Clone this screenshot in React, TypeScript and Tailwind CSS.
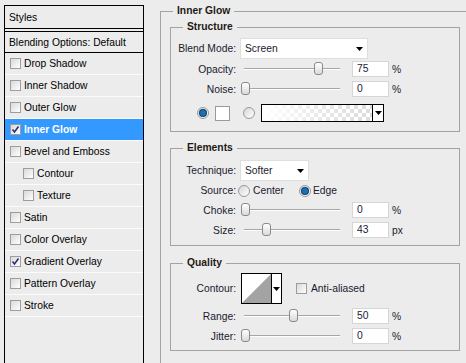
import React from "react";

const LINE = "border-[#a3a3a3]";

function Check({ checked = false }: { checked?: boolean }) {
  return (
    <div className="w-[11px] h-[11px] shrink-0 border border-[#9d9d9d] bg-linear-to-br from-[#d9d9d9] to-white flex items-center justify-center">
      {checked && (
        <svg width="9" height="9" viewBox="0 0 9 9">
          <path d="M1.5 4.5 L3.5 7 L7.5 1.5" fill="none" stroke="#2b2f7a" strokeWidth="1.6" />
        </svg>
      )}
    </div>
  );
}

function Radio({ on = false }: { on?: boolean }) {
  return (
    <div className="w-[12px] h-[12px] shrink-0 rounded-full border border-[#9a9a9a] bg-linear-to-br from-[#d6d6d6] to-white flex items-center justify-center">
      {on && <div className="w-[6px] h-[6px] rounded-full bg-[#1b6fb3] ring-1 ring-[#0d3f6e]" />}
    </div>
  );
}

function Arrow() {
  return (
    <svg width="7" height="4" viewBox="0 0 7 4" className="shrink-0">
      <path d="M0 0 H7 L3.5 4 Z" fill="#000" />
    </svg>
  );
}

function StyleRow({
  label,
  checked,
  indent,
  active,
}: {
  label: string;
  checked?: boolean;
  indent?: boolean;
  active?: boolean;
}) {
  return (
    <div
      className={
        "h-[22px] border-b border-[#fbfbfb] flex items-center " +
        (indent ? "pl-[18px] " : "pl-[5px] ") +
        (active ? "bg-[#3399ff] text-white font-bold" : "text-black")
      }
    >
      <Check checked={checked} />
      <span className="ml-[3px]">{label}</span>
    </div>
  );
}

function Group({
  title,
  children,
  className = "",
}: {
  title: string;
  children: React.ReactNode;
  className?: string;
}) {
  return (
    <div className={"w-[290px] flex flex-col " + className}>
      <div className="h-[14px] flex">
        <div className={"w-[13px] h-[7px] self-end border-l border-t " + LINE} />
        <div className="px-[4px] font-bold leading-[14px] text-[#1e1a14]">{title}</div>
        <div className={"flex-1 h-[7px] self-end border-t border-r " + LINE} />
      </div>
      <div className={"border-l border-r border-b flex flex-col " + LINE}>{children}</div>
    </div>
  );
}

function Label({ children }: { children: React.ReactNode }) {
  return <div className="w-[65px] shrink-0 text-right">{children}</div>;
}

function Slider({ pos }: { pos: number }) {
  return (
    <div className="ml-[4px] w-[104px] h-[16px] relative flex items-center">
      <div className="mx-[4px] flex-1 h-[2px] border-t border-[#a6a6a6] border-b border-b-white" />
      <div
        className="absolute top-[1px] w-[9px] h-[13px] rounded-[3px] border border-[#8a8a8a] bg-linear-to-b from-white to-[#dadada]"
        style={{ left: pos - 4 }}
      />
    </div>
  );
}

function Field({ value, unit }: { value: string; unit: string }) {
  return (
    <>
      <div className="ml-[8px] w-[37px] h-[16px] bg-white border border-[#d6d6d6] pl-[4px] flex items-center text-[#1a1a3a] leading-none">
        {value}
      </div>
      <span className="ml-[3px]">{unit}</span>
    </>
  );
}

function SliderRow({
  label,
  pos,
  value,
  unit,
  h = "h-[20px]",
  extra = "",
}: {
  label: string;
  pos: number;
  value: string;
  unit: string;
  h?: string;
  extra?: string;
}) {
  return (
    <div className={"flex items-center " + h + " " + extra}>
      <Label>{label}</Label>
      <Slider pos={pos} />
      <Field value={value} unit={unit} />
    </div>
  );
}

function Select({ text, w }: { text: string; w: string }) {
  return (
    <div className={"ml-[4px] h-[21px] bg-white border border-[#dedede] flex items-center pl-[4px] pr-[4px] " + w}>
      <span className="flex-1">{text}</span>
      <Arrow />
    </div>
  );
}

export default function App() {
  return (
    <div className="w-[466px] h-[363px] overflow-hidden bg-[#ececec] flex font-['Liberation_Sans',Arial,sans-serif] text-[10.3px] text-[#1a1a2e] leading-[13px]">
      {/* Left styles list */}
      <div className="ml-[4px] mt-[5px] w-[140px] h-[420px] shrink-0 border border-black flex flex-col">
        <div className="h-[23px] border-b border-black flex items-center pl-[4px] text-black">Styles</div>
        <div className="h-[2px]" />
        <div className="h-[22px] border-t border-b border-black flex items-center pl-[4px] text-black">
          Blending Options: Default
        </div>
        <StyleRow label="Drop Shadow" />
        <StyleRow label="Inner Shadow" />
        <StyleRow label="Outer Glow" />
        <StyleRow label="Inner Glow" checked active />
        <StyleRow label="Bevel and Emboss" />
        <StyleRow label="Contour" indent />
        <StyleRow label="Texture" indent />
        <StyleRow label="Satin" />
        <StyleRow label="Color Overlay" />
        <StyleRow label="Gradient Overlay" checked />
        <StyleRow label="Pattern Overlay" />
        <StyleRow label="Stroke" />
      </div>

      {/* Right settings */}
      <div className="ml-[16px] mt-[4px] flex-1 flex flex-col">
        <div className="h-[14px] flex shrink-0">
          <div className={"w-[13px] h-[7px] self-end border-l border-t " + LINE} />
          <div className="px-[4px] font-bold leading-[14px] text-[#1e1a14]">Inner Glow</div>
          <div className={"flex-1 h-[7px] self-end border-t " + LINE} />
        </div>
        <div className={"flex-1 border-l pl-[9px] pt-[2px] flex flex-col " + LINE}>
          <Group title="Structure">
            <div className="pt-[4px] pb-[9px] flex flex-col">
              <div className="flex items-center h-[21px]">
                <Label>Blend Mode:</Label>
                <Select text="Screen" w="w-[128px]" />
              </div>
              <SliderRow label="Opacity:" pos={78} value="75" unit="%" />
              <SliderRow label="Noise:" pos={5} value="0" unit="%" />
              <div className="mt-[5px] h-[18px] flex items-center pl-[26px]">
                <Radio on />
                <div className="ml-[6px] w-[15px] h-[15px] bg-white border border-[#9a9a9a]" />
                <div className="ml-[13px]">
                  <Radio />
                </div>
                <div className="ml-[6px] w-[123px] h-[18px] border border-black flex">
                  <div className="flex-1 bg-[repeating-conic-gradient(#dcdcdc_0_25%,#ffffff_0_50%)] bg-[length:8px_8px]">
                    <div className="w-full h-full bg-linear-to-r from-white via-white/40 to-white/0" />
                  </div>
                  <div className="w-[11px] border-l border-black bg-white flex items-center justify-center">
                    <Arrow />
                  </div>
                </div>
              </div>
            </div>
          </Group>

          <Group title="Elements" className="mt-[9px]">
            <div className="pt-[5px] pb-[5px] flex flex-col">
              <div className="flex items-center h-[21px]">
                <Label>Technique:</Label>
                <Select text="Softer" w="w-[69px]" />
              </div>
              <div className="flex items-center h-[19px]">
                <Label>Source:</Label>
                <div className="ml-[2px]">
                  <Radio />
                </div>
                <span className="ml-[3px] w-[46px]">Center</span>
                <Radio on />
                <span className="ml-[2px]">Edge</span>
              </div>
              <SliderRow label="Choke:" pos={5} value="0" unit="%" />
              <SliderRow label="Size:" pos={26} value="43" unit="px" />
            </div>
          </Group>

          <Group title="Quality" className="mt-[10px]">
            <div className="pt-[3px] pb-[4px] flex flex-col">
              <div className="flex items-center h-[31px]">
                <Label>Contour:</Label>
                <div className="ml-[5px] w-[41px] h-[31px] border border-black flex bg-white">
                  <svg width="29" height="29" viewBox="0 0 29 29" className="shrink-0">
                    <polygon points="0,29 29,0 29,29" fill="#a3a3a3" />
                  </svg>
                  <div className="flex-1 border-l border-black flex items-center justify-center">
                    <Arrow />
                  </div>
                </div>
                <div className="ml-[14px]">
                  <Check />
                </div>
                <span className="ml-[4px]">Anti-aliased</span>
              </div>
              <SliderRow label="Range:" pos={53} value="50" unit="%" extra="mt-[2px]" />
              <SliderRow label="Jitter:" pos={5} value="0" unit="%" />
            </div>
          </Group>
        </div>
      </div>
    </div>
  );
}
